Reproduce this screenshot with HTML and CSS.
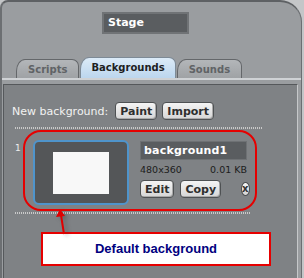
FILE: index.html
```html
<!DOCTYPE html>
<html lang="en">
<head>
<meta charset="UTF-8">
<meta name="viewport" content="width=device-width, initial-scale=1.0">
<title>Stage - Backgrounds</title>
<link rel="stylesheet" href="styles.css">
</head>
<body>

<div class="frame">
    <div class="stage-name">Stage</div>

    <!-- Tabs -->
    <div class="tabs">
        <div class="tab">Scripts</div>
        <div class="tab active">Backgrounds</div>
        <div class="tab">Sounds</div>
    </div>
    <div class="tab-rule"></div>

    <div class="panel">
        <div class="new-row">
            <span class="new-label">New background:</span>
            <button type="button" class="btn">Paint</button>
            <button type="button" class="btn">Import</button>
        </div>
        <div class="dots"></div>

        <!-- Background 1 -->
        <div class="item">
            <span class="item-num">1</span>
            <div class="ring">
                <div class="thumb"><div class="thumb-img"></div></div>
                <div class="info">
                    <div class="bg-name">background1</div>
                    <div class="meta"><span>480x360</span><span>0.01 KB</span></div>
                    <div class="actions">
                        <button type="button" class="btn">Edit</button>
                        <button type="button" class="btn">Copy</button>
                        <span class="del">x</span>
                    </div>
                </div>
            </div>
        </div>
        <div class="dots short"></div>

        <!-- Note -->
        <div class="callout">
            <svg class="arrow" width="20" height="26" viewBox="0 0 20 26">
                <line x1="5" y1="6" x2="8" y2="25" stroke="#e00000" stroke-width="2"/>
                <polygon points="4,0 0,8 9,7" fill="#e00000"/>
            </svg>
            Default background
        </div>
    </div>
</div>

</body>
</html>
```

FILE: styles.css
```css
body {
    margin: 0;
    background-color: #c4c6c8;
    font-family: "DejaVu Sans", Verdana, sans-serif;
}
.frame {
    width: 302px;
    height: 278px;
    box-sizing: border-box;
    background-color: #9a9da0;
    border-top: 2px solid #5e6164;
    border-left: 2px solid #6c6f72;
    border-right: 1px solid #6c6f72;
    border-radius: 8px 22px 0 0;
    overflow: hidden;
}
.stage-name {
    margin: 10px 0 0 100px;
    width: 87px;
    height: 22px;
    box-sizing: border-box;
    background-color: #5a5d60;
    border: 2px solid #707376;
    color: #fff;
    font-size: 11px;
    font-weight: bold;
    line-height: 18px;
    padding-left: 4px;
}
.tabs {
    display: flex;
    align-items: flex-end;
    height: 20px;
    margin-top: 24px;
    padding-left: 14px;
    gap: 1px;
}
.tab {
    height: 18px;
    padding: 0 11px;
    border: 1px solid #64676a;
    border-bottom: none;
    border-radius: 9px 7px 0 0 / 12px 7px 0 0;
    background: linear-gradient(#b3b6b9, #9fa2a5);
    color: #606366;
    font-size: 10px;
    font-weight: bold;
    line-height: 19px;
}
.tab.active {
    height: 20px;
    padding: 0 10px;
    background: linear-gradient(#dcebf8, #bcd6ee);
    border-color: #7d8a96;
    color: #1e1e1e;
}
.tab-rule {
    height: 2px;
    background-color: #cfd2d5;
}
.panel {
    margin: 4px 3px 0 1px;
    height: 200px;
    background-color: #7f8285;
    border-top: 1px solid #55585b;
    border-left: 1px solid #55585b;
    border-right: 1px solid #c6c8ca;
    padding-top: 17px;
    position: relative;
}
.new-row {
    display: flex;
    align-items: center;
    height: 18px;
    padding-left: 8px;
    gap: 5px;
}
.new-label {
    color: #f2f2f2;
    font-size: 11px;
    margin-right: 2px;
}
.btn {
    height: 18px;
    padding: 0 4px;
    border: 1px solid #4e5153;
    border-radius: 4px;
    background: linear-gradient(#f4f4f4, #d6d6d6);
    box-shadow: inset -1px -1px 0 #a9a9a9;
    color: #2e2e2e;
    font-family: "DejaVu Sans", Verdana, sans-serif;
    font-size: 11px;
    font-weight: bold;
}
.dots {
    margin: 7px 0 0 11px;
    width: 247px;
    height: 2px;
    background: repeating-linear-gradient(90deg, #c9c9c9 0 1px, transparent 1px 2px);
}
.dots.short {
    width: 235px;
    margin-top: 1px;
}
.item {
    display: flex;
    margin: 1px 0 0 11px;
}
.item-num {
    width: 8px;
    padding-top: 13px;
    color: #eeeeee;
    font-size: 9px;
}
.ring {
    display: flex;
    width: 234px;
    height: 81px;
    box-sizing: border-box;
    padding: 8px;
    border: 2px solid #e60000;
    border-radius: 18px;
}
.thumb {
    display: flex;
    justify-content: center;
    align-items: center;
    width: 96px;
    height: 65px;
    box-sizing: border-box;
    border: 2px solid #4f94cb;
    border-radius: 6px;
    background-color: #545658;
}
.thumb-img {
    width: 56px;
    height: 42px;
    background-color: #f8f8f8;
}
.info {
    margin-left: 11px;
    width: 107px;
    padding-top: 1px;
}
.bg-name {
    height: 19px;
    box-sizing: border-box;
    background-color: #5a5d60;
    border: 1px solid #6e7174;
    color: #fff;
    font-size: 11px;
    font-weight: bold;
    line-height: 17px;
    padding-left: 3px;
    letter-spacing: 0.2px;
}
.meta {
    display: flex;
    justify-content: space-between;
    margin-top: 3px;
    height: 14px;
    color: #1c1c1c;
    font-size: 9.5px;
    line-height: 14px;
}
.actions {
    display: flex;
    align-items: center;
    gap: 6px;
    margin-top: 3px;
}
.actions .btn {
    height: 18px;
}
.del {
    margin-left: 14px;
    width: 12px;
    height: 12px;
    border: 1px solid #4e5153;
    border-radius: 50%;
    background: linear-gradient(#f6f6f6, #d4d4d4);
    color: #333;
    font-size: 10px;
    font-weight: bold;
    line-height: 11px;
    text-align: center;
}
.callout {
    position: relative;
    margin: 18px 0 0 37px;
    width: 230px;
    height: 34px;
    box-sizing: border-box;
    border: 2px solid #e60000;
    background-color: #fff;
    color: #000080;
    font-family: "Liberation Sans", Arial, sans-serif;
    font-size: 13px;
    font-weight: bold;
    line-height: 30px;
    text-align: center;
}
.arrow {
    position: absolute;
    left: 13px;
    top: -25px;
    filter: drop-shadow(3px 2px 2px rgba(40, 40, 40, 0.35));
}
```
